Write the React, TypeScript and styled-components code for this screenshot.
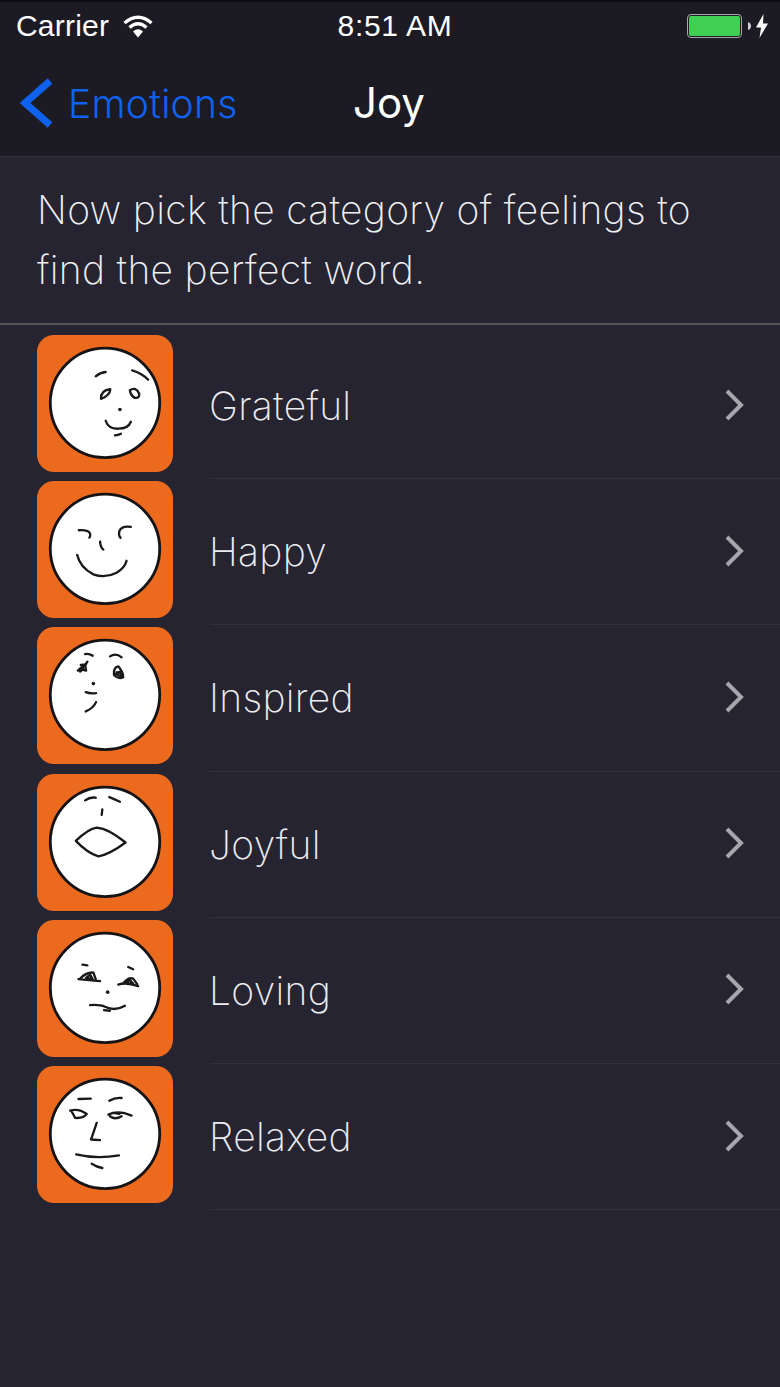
import styled, { createGlobalStyle } from 'styled-components'

const GlobalStyle = createGlobalStyle`
    html, body {
        margin: 0;
        padding: 0;
        background: #252430;
    }
`

const Screen = styled.div`
    width: 780px;
    height: 1387px;
    overflow: hidden;
    background: #252430;
    font-family: Inter, "Liberation Sans", sans-serif;
    color: #fff;
`

const TopBars = styled.header`
    height: 157px;
    box-sizing: border-box;
    border-top: 2px solid #0c0c10;
    border-bottom: 1px solid #33323c;
    background: #1c1b24;
`

const StatusBar = styled.div`
    height: 48px;
    display: grid;
    grid-template-columns: 1fr auto 1fr;
    align-items: center;
    padding: 0 11px 0 16px;
    font-size: 30px;
    letter-spacing: 0.2px;
    font-family: "Liberation Sans", Arial, sans-serif;
`

const StatusGroup = styled.div<{ $end?: boolean }>`
    display: flex;
    align-items: center;
    gap: ${p => (p.$end ? '4px' : '14px')};
    justify-content: ${p => (p.$end ? 'flex-end' : 'flex-start')};
`

const Clock = styled.span`
    margin-left: 5px;
    letter-spacing: 0.7px;
`

const Battery = styled.div`
    width: 55px;
    height: 24px;
    box-sizing: border-box;
    border: 1px solid #a8a8a8;
    border-radius: 4px;
    padding: 1px;
    display: flex;
    margin-right: 2px;

    &::before {
        content: '';
        flex: 1;
        background: #3fd053;
        border-radius: 2px;
    }
`

const NavBar = styled.nav`
    height: 106px;
    display: flex;
    position: relative;
    align-items: center;
    padding: 0 0 6px 20px;
`

const BackLink = styled.a`
    display: flex;
    align-items: center;
    gap: 15px;
    color: #0f62f0;
    font-size: 39px;
    font-weight: 350;
    letter-spacing: 0.3px;
`

const NavTitle = styled.div`
    position: absolute;
    left: 353px;
    top: 27px;
    font-size: 42px;
    font-weight: 400;
`

const Intro = styled.p`
    margin: 0;
    height: 168px;
    box-sizing: border-box;
    padding: 23px 37px 0;
    border-bottom: 2px solid #55555a;
    font-size: 39px;
    font-weight: 250;
    letter-spacing: 0.3px;
    line-height: 60px;
    color: #f0f0f3;
`

const List = styled.ul`
    list-style: none;
    margin: 0;
    padding: 8px 0 0 37px;
`

const Row = styled.li`
    height: 146.2px;
    display: flex;
`

const Tile = styled.svg`
    flex: none;
    width: 136px;
    height: 137px;
    margin-top: 2px;
    border-radius: 17px;
    background: #ec6a1e;
`

const RowBody = styled.div`
    flex: 1;
    margin-left: 37px;
    padding: 0 36px 2px 0;
    display: flex;
    align-items: center;
    justify-content: space-between;
    border-bottom: 1px solid #33323c;
`

const RowLabel = styled.span`
    margin-left: -1px;
    padding-top: 2px;
    font-size: 39px;
    font-weight: 250;
    letter-spacing: 0.3px;
    color: #ececef;
`

type Feeling = {
    label: string,
    lines: string[],
    dots?: [number, number][]
}

const feelings: Feeling[] = [
    {
        label: 'Grateful',
        lines: [
            'M197 138 Q210 127 227 125',
            'M307 120 Q335 128 355 148',
            'M213 206 Q212 180 241 177 Q240 196 213 206 Z',
            'M300 180 Q318 168 328 190 Q330 205 315 203 Q302 196 300 180 Z',
            'M227 272 Q235 297 265 296 Q295 296 303 275',
            'M255 316 Q265 315 273 311',
        ],
        dots: [[270, 238]],
    },
    {
        label: 'Happy',
        lines: [
            'M146 162 Q175 160 180 172 Q182 180 178 184',
            'M303 152 Q275 148 268 165 Q265 178 272 185',
            'M210 196 Q212 215 220 220',
            'M141 236 Q150 275 190 295 Q225 308 260 290 Q285 275 290 254',
        ],
    },
    {
        label: 'Inspired',
        lines: [
            'M165 95 Q178 93 188 100',
            'M240 102 Q258 90 275 105',
            'M143 145 Q160 138 172 118 M152 128 L168 126 M150 148 L160 140',
            'M148 140 L165 128 L168 145 Z',
            'M252 158 Q250 135 265 132 Q280 150 280 165 Q265 172 252 158 Z M260 150 L275 152',
            'M258 155 L272 147 L276 163 Z',
            'M167 210 Q180 215 198 213',
            'M167 268 Q190 258 198 240',
        ],
        dots: [[190, 184]],
    },
    {
        label: 'Joyful',
        lines: [
            'M165 93 Q180 82 197 85',
            'M238 83 Q255 90 270 97',
            'M217 120 L215 137',
            'M137 215 Q175 178 200 175 Q235 178 287 220 Q240 255 205 262 Q170 250 137 215 Z',
        ],
    },
    {
        label: 'Loving',
        lines: [
            'M157 148 L172 150',
            'M145 192 L210 198',
            'M150 190 Q170 170 190 172 L197 192',
            'M168 188 L180 178 L188 192 Z',
            'M295 155 L310 162',
            'M265 208 Q290 200 325 213',
            'M280 205 Q295 185 310 190 L322 207',
            'M288 203 L300 194 L310 206 Z',
            'M180 270 Q210 268 225 275 Q255 290 285 272',
            'M222 285 L240 287',
        ],
        dots: [[233, 231]],
    },
    {
        label: 'Relaxed',
        lines: [
            'M145 113 L182 112',
            'M238 118 Q255 108 275 110',
            'M120 148 Q145 140 170 158 Q160 172 135 170 Q130 160 125 152',
            'M235 160 Q265 145 305 163 M240 165 Q255 177 275 165 M250 155 L268 158',
            'M200 185 Q190 215 183 235 L210 237',
            'M138 280 Q200 295 267 283',
            'M185 308 Q200 318 217 321',
        ],
    },
]

// faces are traced 1:1 from the 3x crops, so the viewBox is the tile in crop pixels
function Face({ lines, dots = [] }: Pick<Feeling, 'lines' | 'dots'>) {
    return (
        <Tile viewBox="20 15 410 410">
            <circle cx="225" cy="218" r="165" fill="#fff" stroke="#151313" strokeWidth="8.5" />
            <g fill="none" stroke="#1a1818" strokeWidth="7" strokeLinecap="round" strokeLinejoin="round">
                {lines.map(d => <path key={d} d={d} />)}
            </g>
            {dots.map(([x, y]) => <circle key={x} cx={x} cy={y} r="5.5" fill="#1a1818" />)}
        </Tile>
    )
}

export default function App() {
    return (
        <Screen>
            <GlobalStyle />
            <TopBars>
                <StatusBar>
                    <StatusGroup>
                        <span>Carrier</span>
                        <svg width="30" height="23" viewBox="0 0 30 23">
                            <g fill="none" stroke="#fff" strokeWidth="3.4">
                                <path d="M1.5 8 Q15 -3.5 28.5 8" />
                                <path d="M6.5 12.5 Q15 5 23.500 12.500" />
                            </g>
                            <path d="M10 16.500 Q15 12 20 16.500 L15 22.500 Z" fill="#fff" />
                        </svg>
                    </StatusGroup>
                    <Clock>8:51 AM</Clock>
                    <StatusGroup $end>
                        <Battery />
                        <svg width="3" height="8" viewBox="0 0 3 8"><path d="M0 0 Q3 1 3 4 Q3 7 0 8 Z" fill="#d0d0d0" /></svg>
                        <svg width="14" height="24" viewBox="0 0 14 24"><path d="M8.500 0 L1 13.500 H6 L4.500 24 L13 9.500 H8 Z" fill="#fff" /></svg>
                    </StatusGroup>
                </StatusBar>
                <NavBar>
                    <BackLink>
                        <svg width="33" height="50" viewBox="0 0 33 50">
                            <path d="M30 3 L5 25 L30 47" fill="none" stroke="#0f62f0" strokeWidth="7" />
                        </svg>
                        Emotions
                    </BackLink>
                    <NavTitle>Joy</NavTitle>
                </NavBar>
            </TopBars>
            <Intro>
                Now pick the category of feelings to<br />find the perfect word.
            </Intro>
            <List>
                {feelings.map(f => (
                    <Row key={f.label}>
                        <Face lines={f.lines} dots={f.dots} />
                        <RowBody>
                            <RowLabel>{f.label}</RowLabel>
                            <svg width="20" height="32" viewBox="0 0 20 32">
                                <path d="M3 2 L17 16 L3 30" fill="none" stroke="#a6a6ac" strokeWidth="4" />
                            </svg>
                        </RowBody>
                    </Row>
                ))}
            </List>
        </Screen>
    )
}
